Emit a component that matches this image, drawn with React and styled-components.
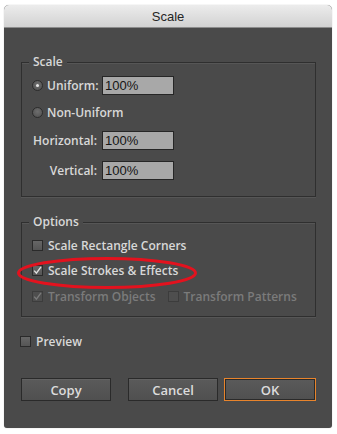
import React from 'react';
import styled, { createGlobalStyle } from 'styled-components';

const GlobalStyle = createGlobalStyle`
    html, body {
        margin: 0;
        padding: 0;
        background: #fff;
    }
`;

const Page = styled.div`
    padding: 5px 0 0 4px;
    width: 337px;
    height: 434px;
    box-sizing: border-box;
`;

const Window = styled.div`
    width: 328px;
    height: 423px;
    background: #4a4a4a;
    border-radius: 5px 5px 3px 3px;
    overflow: hidden;
    box-shadow: 0 0 1px rgba(0, 0, 0, 0.35);
    font-family: 'Open Sans', 'DejaVu Sans', sans-serif;
    font-weight: 600;
    font-size: 12px;
    color: #d8d8d8;
`;

const TitleBar = styled.div`
    height: 22px;
    display: flex;
    align-items: center;
    justify-content: center;
    background: linear-gradient(#ececec, #d2d2d2);
    border-bottom: 1px solid #8c8c8c;
    font-family: 'Liberation Sans', Arial, sans-serif;
    font-weight: 400;
    font-size: 13px;
    color: #262626;
`;

const Body = styled.div`
    padding: 34px 16px 0 17px;
    display: flex;
    flex-direction: column;
`;

const Group = styled.div`
    position: relative;
    border: 1px solid #2f2f2f;
    box-shadow: 0 1px 0 #565656, inset 0 1px 0 #565656;
    height: ${props => props.height}px;
    box-sizing: border-box;
    margin-bottom: ${props => props.gap || 0}px;
    padding: 0 0 0 10px;
    display: flex;
    flex-direction: column;
`;

const Legend = styled.div`
    align-self: flex-start;
    margin: -9px 0 0 -3px;
    padding: 0 4px;
    line-height: 16px;
    background: #4a4a4a;
    color: #d8d8d8;
`;

const Row = styled.div`
    display: flex;
    align-items: center;
    height: ${props => props.h || 19}px;
    margin-top: ${props => props.top || 0}px;
    color: ${props => (props.disabled ? '#7b7b7b' : '#d8d8d8')};
`;

const LabelCell = styled.div`
    width: 65px;
    display: flex;
    align-items: center;
    justify-content: ${props => (props.right ? 'flex-end' : 'flex-start')};
    margin-right: 5px;
    white-space: nowrap;
`;

const Radio = styled.span`
    width: 11px;
    height: 11px;
    border-radius: 50%;
    box-sizing: border-box;
    border: 1px solid #2c2c2c;
    background: radial-gradient(circle at 50% 40%, #6e6e6e, #4e4e4e);
    margin-right: 4px;
    display: flex;
    align-items: center;
    justify-content: center;
    flex-shrink: 0;

    &::after {
        content: '';
        width: 3px;
        height: 3px;
        border-radius: 50%;
        background: ${props => (props.checked ? '#e6e6e6' : 'transparent')};
    }
`;

const Box = styled.span`
    width: 11px;
    height: 11px;
    box-sizing: border-box;
    border: 1px solid ${props => (props.disabled ? '#3c3c3c' : '#2a2a2a')};
    background: ${props => (props.disabled ? '#4e4e4e' : 'linear-gradient(#666, #555)')};
    margin-right: 5px;
    flex-shrink: 0;
    display: flex;
    align-items: center;
    justify-content: center;
    position: relative;
`;

const Field = styled.div`
    width: 72px;
    height: 19px;
    box-sizing: border-box;
    border: 1px solid #262626;
    background: #a8a8a8;
    color: #151515;
    font-family: 'Liberation Sans', Arial, sans-serif;
    font-weight: 400;
    font-size: 13px;
    line-height: 17px;
    padding-left: 2px;
`;

const Ellipse = styled.svg`
    position: absolute;
    left: -6px;
    top: 33px;
    pointer-events: none;
`;

const ButtonBar = styled.div`
    display: flex;
    gap: 0;
    margin-top: 27px;
`;

const Button = styled.div`
    width: ${props => (props.primary ? 92 : 90)}px;
    height: 23px;
    box-sizing: border-box;
    margin-left: ${props => props.offset || 0}px;
    border: 1px solid ${props => (props.primary ? '#e8842c' : '#2a2a2a')};
    box-shadow: ${props => (props.primary ? 'inset 0 0 0 1px #2a2a2a' : 'inset 0 1px 0 #626262')};
    background: linear-gradient(#5a5a5a, #505050);
    display: flex;
    align-items: center;
    justify-content: center;
    font-size: 13px;
    color: #dcdcdc;
`;

function Check({ disabled }) {
    return (
        <svg width="9" height="9" viewBox="0 0 9 9">
            <path
                d="M1.2 4.6 L3.4 7.2 L8 0.8"
                fill="none"
                stroke={disabled ? '#7a7a7a' : '#dedede'}
                strokeWidth="1.4"
            />
        </svg>
    );
}

function CheckRow({ checked, disabled, label, top, children }) {
    return (
        <Row top={top} disabled={disabled}>
            <Box disabled={disabled}>{checked && <Check disabled={disabled} />}</Box>
            {label}
            {children}
        </Row>
    );
}

export default function App() {
    return (
        <Page>
            <GlobalStyle />
            <Window>
                <TitleBar>Scale</TitleBar>
                <Body>
                    <Group height={135} gap={25}>
                        <Legend>Scale</Legend>
                        <Row top={6}>
                            <LabelCell>
                                <Radio checked />
                                Uniform:
                            </LabelCell>
                            <Field>100%</Field>
                        </Row>
                        <Row top={8}>
                            <LabelCell>
                                <Radio />
                                Non-Uniform
                            </LabelCell>
                        </Row>
                        <Row top={9}>
                            <LabelCell right>Horizontal:</LabelCell>
                            <Field>100%</Field>
                        </Row>
                        <Row top={11}>
                            <LabelCell right>Vertical:</LabelCell>
                            <Field>100%</Field>
                        </Row>
                    </Group>

                    <Group height={95}>
                        <Legend>Options</Legend>
                        <CheckRow top={6} label="Scale Rectangle Corners" />
                        <CheckRow top={6} checked label="Scale Strokes & Effects" />
                        <CheckRow top={7} checked disabled label="Transform Objects">
                            <Box disabled style={{ marginLeft: 12 }} />
                            Transform Patterns
                        </CheckRow>
                        <Ellipse width="182" height="34" viewBox="0 0 182 34">
                            <ellipse cx="91" cy="17" rx="88.5" ry="14.5" fill="none" stroke="#e3121e" strokeWidth="3" />
                        </Ellipse>
                    </Group>

                    <Row top={15} style={{ marginLeft: -1 }}>
                        <Box />
                        Preview
                    </Row>

                    <ButtonBar>
                        <Button>Copy</Button>
                        <Button offset={17}>Cancel</Button>
                        <Button primary offset={6}>OK</Button>
                    </ButtonBar>
                </Body>
            </Window>
        </Page>
    );
}
